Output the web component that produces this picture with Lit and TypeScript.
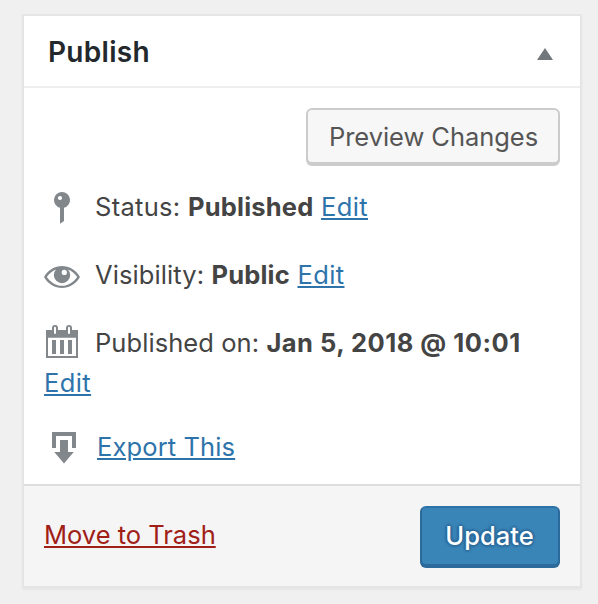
import { LitElement, html, css, svg } from "lit";
import { customElement } from "lit/decorators.js";

const pin = svg`
  <path fill-rule="evenodd" d="M18 5a8 8 0 0 1 2 15.75V34l-4 2.8V20.75A8 8 0 0 1 18 5zm-2 3.9a2.1 2.1 0 1 0 0 4.2a2.1 2.1 0 0 0 0-4.2z"/>`;
const eye = svg`
  <path fill-rule="evenodd" d="M0 22C4.500 14.500 11 11 18 11s13.500 3.500 18 11c-4.500 7.500-11 11-18 11S4.500 29.500 0 22zm2.800 0c4 5.800 9.400 8.800 15.200 8.800s11.200-3 15.200-8.800c-2.400-3.600-5.600-6.200-9.200-7.600a8.200 8.200 0 1 1-12 0C8.400 15.800 5.200 18.400 2.800 22zm17.500-7.200a2.600 2.600 0 1 0 0 5.200a2.600 2.600 0 0 0 0-5.200z"/>`;
const calendar = svg`
  <path fill-rule="evenodd" d="M2 7h32v28H2zM4 14.700V33h28V14.700z"/>
  <path d="M8 17h4v14H8zM16 17h4v14h-4zM24 17h4v14h-4z"/>
  <rect x="8" y="2" width="6" height="9" rx="3"/><rect x="22" y="2" width="6" height="9" rx="3"/>
  <rect class="gap" x="10" y="3.700" width="2" height="7.300" rx="1"/>
  <rect class="gap" x="24" y="3.700" width="2" height="7.300" rx="1"/>`;
const exportArrow = svg`
  <path d="M8 5h24v16h-4V9H12v12H8zM16 13h8v12h5.700L20 36.500 10.300 25H16z"/>`;

@customElement("app-root")
export class AppRoot extends LitElement {
  static styles = css`
    :host {
      display: block;
      box-sizing: border-box;
      height: 604px;
      padding: 14px 16px 16px 22px;
      background: #f0f0f0;
      color: #444;
      font: 25.5px/40px Inter, sans-serif;
    }
    * { box-sizing: border-box; }
    .box {
      display: flex;
      flex-direction: column;
      height: 574px;
      background: #fff;
      border: 2px solid #e5e5e5;
      box-shadow: 0 2px 2px rgba(0, 0, 0, 0.04);
    }
    .head {
      display: flex;
      flex: none;
      align-items: center;
      justify-content: space-between;
      height: 72px;
      padding: 0 27px 0 24px;
      border-bottom: 2px solid #eee;
    }
    h2 { margin: 2px 0 0; font-size: 28px; font-weight: 600; letter-spacing: 0.3px; color: #23282d; }
    .toggle { width: 16px; height: 12px; margin-top: 6px; fill: #72777c; }
    .actions { display: flex; flex: none; justify-content: flex-end; padding: 20px 20px 23px; }
    button { font: inherit; border-radius: 6px; padding: 0; white-space: nowrap; }
    .preview {
      width: 254px;
      height: 56px;
      padding: 2px 0 0 1px;
      letter-spacing: -0.05px;
      color: #555;
      background: #f7f7f7;
      border: 2px solid #ccc;
      box-shadow: 0 2px 0 #ccc;
    }
    .rows { flex: 1; min-height: 0; padding: 0 20px; }
    .row { display: flex; height: 40px; margin-bottom: 28px; white-space: pre; }
    .row.dated, .row.last { margin-bottom: 0; }
    .wrapped { height: 40px; margin-bottom: 24px; }
    .icon { flex: none; width: 40px; height: 40px; margin-right: 11px; fill: #82878c; }
    .gap { fill: #fff; }
    b { margin-right: 7.5px; font-weight: 700; letter-spacing: 0.2px; }
    .status { letter-spacing: 0.3px; }
    .visibility { letter-spacing: 0.1px; }
    .published { letter-spacing: 0.07px; }
    .date { letter-spacing: 0.5px; }
    a {
      color: #2e74ab;
      text-decoration: underline;
      text-decoration-thickness: 2px;
      text-underline-offset: 2px;
    }
    .edit { letter-spacing: 0.4px; }
    .exp { margin-left: 2px; letter-spacing: 0.12px; }
    .foot {
      display: flex;
      flex: none;
      align-items: center;
      justify-content: space-between;
      height: 102px;
      padding: 0 20px;
      background: #f5f5f5;
      border-top: 2px solid #ddd;
    }
    .trash { margin-top: -2px; color: #a02018; }
    .update {
      width: 140px;
      height: 60px;
      padding-right: 1px;
      font-weight: 500;
      color: #fff;
      background: #3a85b7;
      border: 2px solid;
      border-color: #2e73a8 #2c6a9b #2c6a9b;
      box-shadow: 0 2px 0 #2c6a9b;
      text-shadow: 0 -2px 2px #2c6a9b, 2px 0 2px #2c6a9b, 0 2px 2px #2c6a9b, -2px 0 2px #2c6a9b;
    }
  `;

  private icon(shape: unknown) {
    return html`<svg class="icon" viewBox="0 0 40 40">${shape}</svg>`;
  }

  render() {
    return html`
      <section class="box">
        <header class="head">
          <h2>Publish</h2>
          <svg class="toggle" viewBox="0 0 16 12"><path d="M8 0l8 12H0z" /></svg>
        </header>
        <div class="actions"><button class="preview">Preview Changes</button></div>
        <div class="rows">
          <div class="row">${this.icon(pin)}<span class="status">Status: </span><b>Published</b><a class="edit" href="#">Edit</a></div>
          <div class="row">${this.icon(eye)}<span class="visibility">Visibility: </span><b>Public</b><a class="edit" href="#">Edit</a></div>
          <div class="row dated">${this.icon(calendar)}<span class="published">Published on: </span><b class="date">Jan 5, 2018 @ 10:01</b></div>
          <div class="wrapped"><a class="edit" href="#">Edit</a></div>
          <div class="row last">${this.icon(exportArrow)}<a class="exp" href="#">Export This</a></div>
        </div>
        <footer class="foot">
          <a class="trash" href="#">Move to Trash</a>
          <button class="update">Update</button>
        </footer>
      </section>
    `;
  }
}
